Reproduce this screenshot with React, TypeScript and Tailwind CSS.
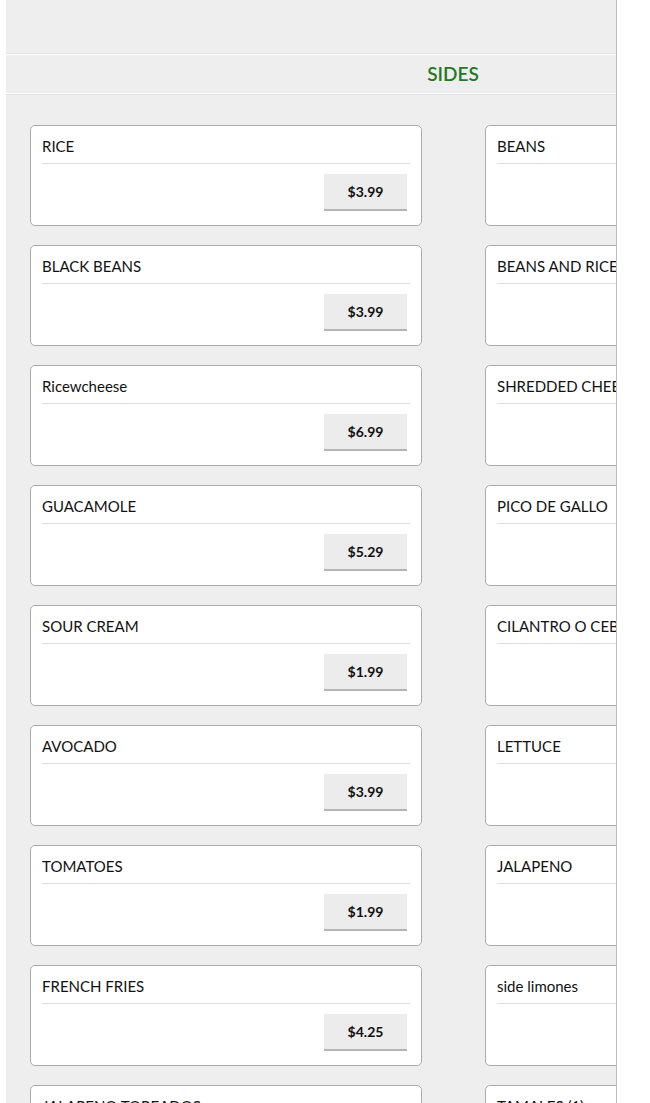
const LEFT = [
  { name: "RICE", price: "$3.99" },
  { name: "BLACK BEANS", price: "$3.99" },
  { name: "Ricewcheese", price: "$6.99" },
  { name: "GUACAMOLE", price: "$5.29" },
  { name: "SOUR CREAM", price: "$1.99" },
  { name: "AVOCADO", price: "$3.99" },
  { name: "TOMATOES", price: "$1.99" },
  { name: "FRENCH FRIES", price: "$4.25" },
  { name: "JALAPENO TOREADOS", price: "$2.99" },
];

const RIGHT = [
  { name: "BEANS", price: "$3.99" },
  { name: "BEANS AND RICE", price: "$5.99" },
  { name: "SHREDDED CHEESE", price: "$2.99" },
  { name: "PICO DE GALLO", price: "$2.49" },
  { name: "CILANTRO O CEBOLLA", price: "$0.99" },
  { name: "LETTUCE", price: "$0.99" },
  { name: "JALAPENO", price: "$0.99" },
  { name: "side limones", price: "$0.50" },
  { name: "TAMALES (1)", price: "$3.50" },
];

export default function App() {
  const items = LEFT.flatMap((l, i) => [l, RIGHT[i]]);
  return (
    <div
      className="h-[1103px] overflow-hidden bg-white pl-[6px]"
      style={{ fontFamily: "Lato, 'Liberation Sans', sans-serif" }}
    >
      <div className="h-full w-[611px] overflow-hidden border-r border-[#bcbcbc] bg-[#eeeeee]">
        <div className="w-[894px]">
          <div className="h-[54px] border-b border-[#e2e2e2]" />
          <div className="flex h-[40px] items-center justify-center border-y border-white pt-[1px]">
            <h2 className="text-[19px] font-semibold text-[#1f7a1f]">SIDES</h2>
          </div>
          <div className="border-t border-[#e2e2e2]" />
          <div className="grid grid-cols-[392px_392px] gap-x-[63px] gap-y-[19px] pl-[24px] pt-[30px]">
            {items.map((item, i) => (
              <SideCard key={i} name={item.name} price={item.price} />
            ))}
          </div>
        </div>
      </div>
    </div>
  );
}

function SideCard({ name, price }: { name: string; price: string }) {
  return (
    <div className="h-[101px] rounded-[5px] border border-[#acacac] bg-white">
      <div className="px-[11px] pb-[7px] pt-[10px] text-[15px] leading-[20px] text-[#111] whitespace-nowrap">
        {name}
      </div>
      <div className="mx-[11px] border-t border-[#dedede]" />
      <div className="flex justify-end pr-[14px] pt-[10px]">
        <button className="h-[37px] w-[83px] border-b-2 border-[#b5b5b5] bg-[#ececec] text-[14px] font-bold text-[#111]">
          {price}
        </button>
      </div>
    </div>
  );
}
